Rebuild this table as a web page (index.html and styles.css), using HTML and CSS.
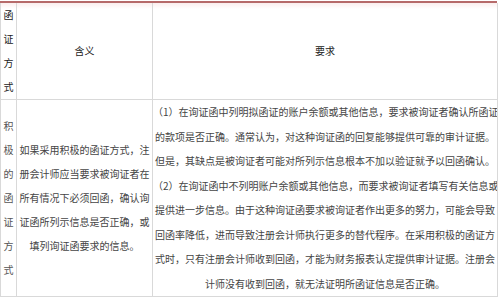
FILE: index.html
```html
<!DOCTYPE html>
<html lang="zh">
<head>
<meta charset="utf-8">
<link rel="stylesheet" href="styles.css">
</head>
<body>
<div class="sheet">
  <table class="grid">
    <colgroup>
      <col class="c-way">
      <col class="c-mean">
      <col class="c-req">
    </colgroup>
    <thead>
      <tr>
        <th class="vert">函证方式</th>
        <th>含义</th>
        <th>要求</th>
      </tr>
    </thead>
    <tbody>
      <tr>
        <td class="vert">积极的函证方式</td>
        <td class="mean">如果采用积极的函证方式，注<br>册会计师应当要求被询证者在<br>所有情况下必须回函，确认询<br>证函所列示信息是否正确，或<br>填列询证函要求的信息。</td>
        <td class="req">（1）在询证函中列明拟函证的账户余额或其他信息，要求被询证者确认所函证<br>的款项是否正确。通常认为，对这种询证函的回复能够提供可靠的审计证据。<br>但是，其缺点是被询证者可能对所列示信息根本不加以验证就予以回函确认。<br>（2）在询证函中不列明账户余额或其他信息，而要求被询证者填写有关信息或<br>提供进一步信息。由于这种询证函要求被询证者作出更多的努力，可能会导致<br>回函率降低，进而导致注册会计师执行更多的替代程序。在采用积极的函证方<br>式时，只有注册会计师收到回函，才能为财务报表认定提供审计证据。注册会<br>计师没有收到回函，就无法证明所函证信息是否正确。</td>
      </tr>
    </tbody>
  </table>
</div>
</body>
</html>
```

FILE: styles.css
```css
html, body {
  margin: 0;
  padding: 0;
  background: #ffffff;
}

body {
  font-family: "Noto Sans CJK SC", "Noto Sans", sans-serif;
  font-size: 10px;
  color: #444444;
}

.sheet {
  margin-top: 1px;
  width: 497px;
  border-top: 2px solid #b66a6a;
  background: linear-gradient(#fbeeee, #ffffff 6px);
}

.grid {
  width: 497px;
  border-collapse: collapse;
  table-layout: fixed;
}

.c-way { width: 16px; }
.c-mean { width: 136px; }
.c-req { width: 345px; }

.grid th,
.grid td {
  border: 1px solid #d9d9d9;
  padding: 0;
  text-align: center;
  vertical-align: middle;
  overflow: hidden;
}

.grid thead th {
  border-top: none;
  font-weight: normal;
  color: #222222;
  line-height: 24px;
}

.grid .vert {
  padding: 0 2px;
  line-height: 24px;
  word-break: break-all;
}

.grid td.vert {
  color: #555555;
}

.mean {
  line-height: 24px;
  padding: 0 2px;
  white-space: nowrap;
}

.req {
  line-height: 24.5px;
  padding: 0;
  white-space: nowrap;
}
```
